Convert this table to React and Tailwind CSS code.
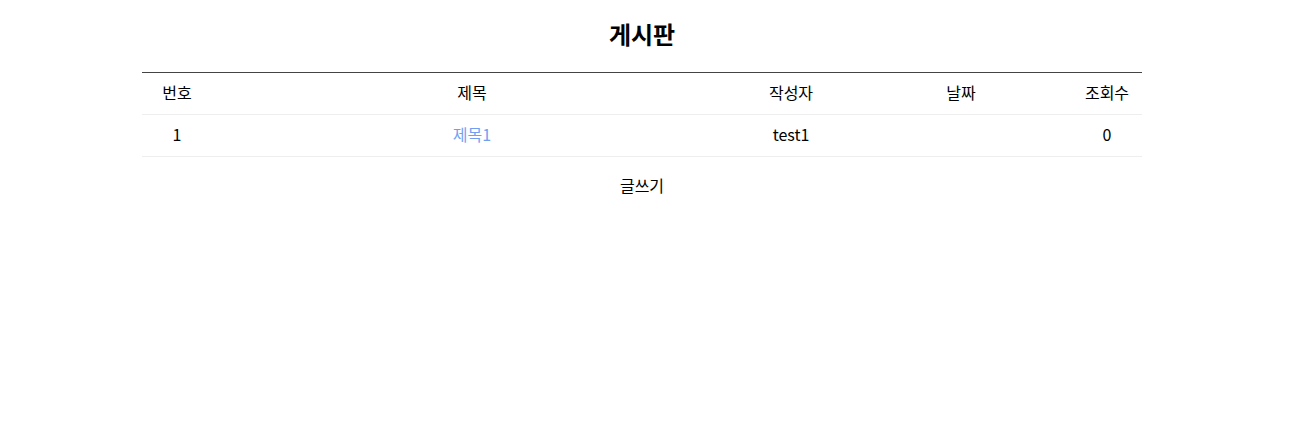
import React from 'react';

const cols = ['w-[70px]', 'w-[520px]', 'w-[118px]', 'w-[222px]', 'w-[70px]'];

const posts = [{ id: 1, title: '제목1', writer: 'test1', date: '', views: 0 }];

const App = () => {
  return (
    <div className="min-h-screen bg-white text-black font-['Noto_Sans_CJK_KR','Liberation_Sans',sans-serif]">
      {/* page laid out as if a 17px scrollbar takes the right edge */}
      <div className="w-[1284px]">
        <div className="mx-auto w-[1000px]">
          <h2 className="text-center text-[24px] font-bold leading-[32px] pt-[18px] pb-[22px]">게시판</h2>

          <div className="border-t border-[#444]">
            {/* header */}
            <div className="flex h-[42px] items-center pb-[3px] border-b border-[#eee] text-[16px]">
              {['번호', '제목', '작성자', '날짜', '조회수'].map((h, i) => (
                <div key={h} className={`${cols[i]} text-center`}>{h}</div>
              ))}
            </div>
            {posts.map((p) => (
              <div key={p.id} className="flex h-[42px] items-center pb-[3px] border-b border-[#eee] text-[16px]">
                <div className={`${cols[0]} text-center`}>{p.id}</div>
                <div className={`${cols[1]} text-center`}>
                  <a className="text-[#729ef2] cursor-pointer">{p.title}</a>
                </div>
                <div className={`${cols[2]} text-center`}>{p.writer}</div>
                <div className={`${cols[3]} text-center`}>{p.date}</div>
                <div className={`${cols[4]} text-center`}>{p.views}</div>
              </div>
            ))}
          </div>

          <div className="mt-[16px] text-center text-[16px] leading-[24px]">
            <button className="cursor-pointer">글쓰기</button>
          </div>
        </div>
      </div>
    </div>
  );
};

export default App;
